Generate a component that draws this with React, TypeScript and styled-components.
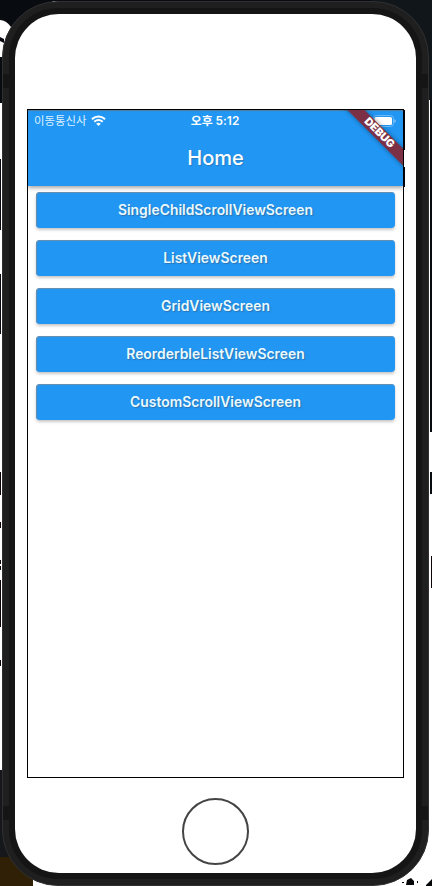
import React from 'react';
import styled, { createGlobalStyle } from 'styled-components';

const GlobalStyle = createGlobalStyle`
  *, *::before, *::after { box-sizing: border-box; }
  body { margin: 0; background: #fff; overflow: hidden; }
`;

const Desktop = styled.main`
  display: grid;
  width: 432px;
  height: 886px;
  overflow: hidden;
  background: #fff;
  font-family: Inter, 'Noto Sans CJK KR', sans-serif;
`;

const Backdrop = styled.svg`
  grid-area: 1 / 1;
`;

const Phone = styled.div`
  grid-area: 1 / 1;
  display: flex;
  height: 885px;
  margin: 1px 3px 0 2px;
  padding: 6px;
  border: 1px solid #303030;
  border-radius: 56px;
  background:
    linear-gradient(#151515, #151515) 0 72px / 100% 14px no-repeat,
    linear-gradient(#151515, #151515) 0 804px / 100% 14px no-repeat,
    #1f1f1f;
`;

const Bezel = styled.div`
  display: flex;
  flex: 1;
  padding: 6px;
  border-radius: 49px;
  background: #151515;
`;

const Face = styled.div`
  display: flex;
  flex: 1;
  flex-direction: column;
  align-items: center;
  gap: 20px;
  padding-top: 95px;
  border-radius: 44px;
  background: #fff;
`;

const ScreenFrame = styled.div`
  width: 379px;
  padding: 0 1px;
  background:
    linear-gradient(#02050d, #02050d) 100% 1px / 1px 40px no-repeat,
    linear-gradient(#02050d, #02050d) 100% 58px / 1px 20px no-repeat;
`;

const Screen = styled.section`
  position: relative;
  display: flex;
  flex-direction: column;
  height: 669px;
  border: 1px solid #000;
  overflow: hidden;
`;

const AppBar = styled.header`
  display: flex;
  flex-direction: column;
  height: 76px;
  background: #2196f3;
  color: #fff;
  box-shadow: 0 2px 4px rgba(0, 0, 0, 0.35), inset 0 1px 1px #527d9e;
`;

const StatusBar = styled.div`
  display: grid;
  grid-template-columns: 1fr auto 1fr;
  align-items: center;
  height: 21px;
  padding: 0 7px 0 6px;
`;

const Carrier = styled.div`
  display: flex;
  align-items: center;
  gap: 5px;
  color: #dcf0ff;
  font-size: 11.4px;
  line-height: 20px;
  white-space: nowrap;
`;

const Clock = styled.time`
  font-size: 11.9px;
  font-weight: 600;
  line-height: 20px;
`;

const Battery = styled.svg`
  justify-self: end;
`;

const Title = styled.h1`
  flex: 1;
  margin: 0;
  font-size: 20px;
  font-weight: 550;
  line-height: 55px;
  text-align: center;
  text-shadow: 1px 1px 1px rgba(60, 80, 110, 0.35);
`;

const Menu = styled.nav`
  display: flex;
  flex-direction: column;
  gap: 12px;
  padding: 6px 8px;
`;

const MenuButton = styled.button`
  height: 36px;
  padding: 0 0 1px;
  border: 0;
  border-radius: 4px;
  background: #2196f3;
  color: #eafaff;
  font: 600 13.9px/34px Inter, sans-serif;
  text-shadow: 1px 1px 1px rgba(60, 80, 110, 0.5);
  box-shadow: 0 2px 3px rgba(0, 0, 0, 0.22), inset 1px 1px 1px #6b8eaf;
`;

const Banner = styled.div`
  position: absolute;
  top: 14px;
  right: -29px;
  width: 112px;
  height: 12px;
  padding-left: 9px;
  transform: rotate(45deg);
  background: #7c3045;
  box-shadow: 0 0 5px rgba(0, 0, 0, 0.4);
  color: #fff;
  font-size: 10.8px;
  font-weight: 900;
  line-height: 12px;
  text-align: center;
`;

const HomeButton = styled.div`
  width: 67px;
  height: 67px;
  border: 2px solid #444;
  border-radius: 50%;
`;

const screens = [
  'SingleChildScrollViewScreen',
  'ListViewScreen',
  'GridViewScreen',
  'ReorderbleListViewScreen',
  'CustomScrollViewScreen',
];

export default function App() {
  return (
    <>
      <GlobalStyle />
      <Desktop>
        <Backdrop width="432" height="886" aria-hidden="true">
          <path fill="#080c11" d="M0 0h55L11 27Q6 20 0 20ZM0 37l4 2v4l-4-2ZM0 57h2v46H0ZM50 0h382v432h-2V100L380 1H50ZM0 159h1v71H0ZM0 274h1v60H0ZM430 472h2v22h-2Z" />
          <path fill="#11161b" d="M370 0h62v100h-6Q414 18 370 0Z" />
          <path fill="#0e0202" d="M0 472h1v23H0ZM0 522h1v6H0ZM0 560h1v4H0ZM0 566h1v4H0ZM0 580h1v47H0ZM0 660h1v6H0ZM431 556h1v32h-1Z" />
          <path fill="#15171a" d="M0 770h3v60l28 50v6H0Z" />
          <path fill="#302006" d="M0 857h9l24 20v9H0Z" />
          <path fill="#040608" d="m407 880 4-2 3 3v4h-8ZM402 882h2v1h-2ZM417 881h1v2h-1ZM426 885l6-6v7h-6Z" />
        </Backdrop>
        <Phone>
          <Bezel>
            <Face>
              <ScreenFrame>
                <Screen>
                  <AppBar>
                    <StatusBar>
                      <Carrier>
                        이동통신사
                        <svg width="15" height="12" viewBox="0 0 15 12" fill="none" aria-label="Wi-Fi">
                          <path d="M.9 4.1Q7.5-1.1 14.1 4.1M3.3 6.7q4.2-3.5 8.4 0" stroke="#fff" strokeWidth="2" />
                          <path d="M5.2 8.7q2.3-1.8 4.6 0L7.5 11Z" fill="#fff" />
                        </svg>
                      </Carrier>
                      <Clock>오후 5:12</Clock>
                      <Battery width="23" height="12" viewBox="0 0 23 12" aria-label="Battery">
                        <rect x=".5" y=".5" width="20" height="11" rx="3" fill="none" stroke="#6bb9f6" />
                        <rect x="1.5" y="2" width="17.5" height="8" rx="1.5" fill="#fff" />
                        <path d="M21.5 4q2.4 2 0 4Z" fill="#a7d5fb" />
                      </Battery>
                    </StatusBar>
                    <Title>Home</Title>
                  </AppBar>
                  <Menu>
                    {screens.map((name) => (
                      <MenuButton key={name}>{name}</MenuButton>
                    ))}
                  </Menu>
                  <Banner>DEBUG</Banner>
                </Screen>
              </ScreenFrame>
              <HomeButton />
            </Face>
          </Bezel>
        </Phone>
      </Desktop>
    </>
  );
}
